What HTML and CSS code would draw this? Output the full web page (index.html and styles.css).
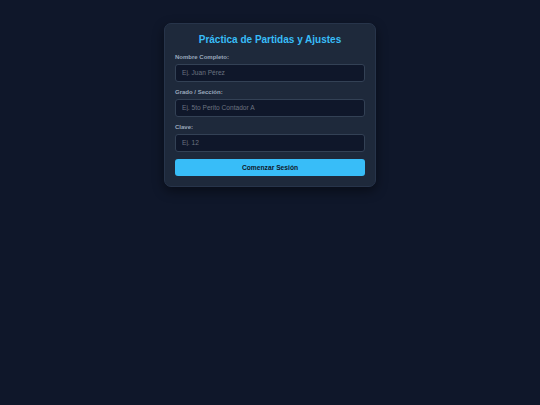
FILE: index.html
```html
<!DOCTYPE html>
<html lang="es">
<head>
<meta charset="utf-8">
<title>Práctica de Partidas y Ajustes</title>
<link rel="stylesheet" href="styles.css">
</head>
<body>
<main class="card">
  <h1 class="title">Práctica de Partidas y Ajustes</h1>
  <div class="field">
    <label class="label" for="nombre">Nombre Completo:</label>
    <input class="input" id="nombre" type="text" placeholder="Ej. Juan Pérez">
  </div>
  <div class="field">
    <label class="label" for="grado">Grado / Sección:</label>
    <input class="input" id="grado" type="text" placeholder="Ej. 5to Perito Contador A">
  </div>
  <div class="field">
    <label class="label" for="clave">Clave:</label>
    <input class="input" id="clave" type="text" placeholder="Ej. 12">
  </div>
  <button class="button" type="button">Comenzar Sesión</button>
</main>
</body>
</html>
```
FILE: styles.css
```css
html, body {
  margin: 0;
  padding: 0;
  background: #0f172a;
  font-family: "Liberation Sans", Arial, sans-serif;
}
body {
  display: flex;
  justify-content: center;
  align-items: flex-start;
  min-height: 405px;
}
.card {
  box-sizing: border-box;
  width: 212px;
  margin-top: 23px;
  padding: 10px;
  background: #1e293b;
  border: 1px solid #27344a;
  border-radius: 7px;
  box-shadow: 0 4px 12px rgba(0, 0, 0, 0.45);
}
.title {
  margin: 0 0 8.7px;
  font-size: 10px;
  line-height: 11px;
  font-weight: bold;
  color: #38bdf8;
  text-align: center;
}
.field {
  margin-bottom: 7px;
}
.label {
  display: block;
  font-size: 6px;
  line-height: 7px;
  font-weight: bold;
  color: #9aa8bc;
  margin-bottom: 3px;
}
.input {
  display: block;
  box-sizing: border-box;
  width: 100%;
  height: 18px;
  margin: 0;
  padding: 0 6px;
  background: #0f172a;
  border: 1px solid #334155;
  border-radius: 3px;
  font-family: "Liberation Sans", Arial, sans-serif;
  font-size: 6.6px;
  color: #e2e8f0;
  outline: none;
}
.input::placeholder {
  color: #6b7280;
}
.button {
  display: block;
  box-sizing: border-box;
  width: 100%;
  height: 17.5px;
  margin: 0;
  padding: 0;
  background: #38bdf8;
  border: none;
  border-radius: 3px;
  font-family: "Liberation Sans", Arial, sans-serif;
  font-size: 6.7px;
  font-weight: bold;
  color: #0f172a;
}
```
